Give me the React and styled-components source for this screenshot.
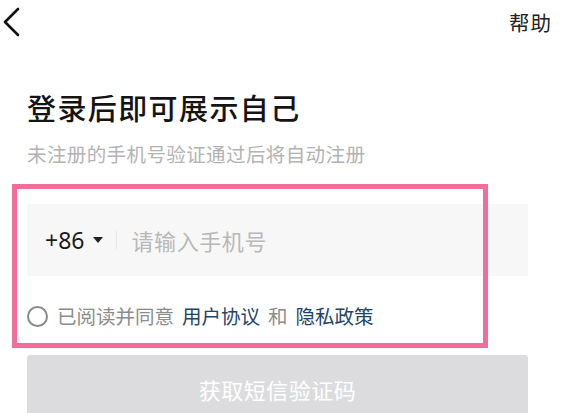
import React from "react";
import styled, { createGlobalStyle } from "styled-components";

const GlobalStyle = createGlobalStyle`
  body {
    margin: 0;
    background: #fff;
    font-family: "Noto Sans CJK SC", "Noto Sans", sans-serif;
    color: #1c1c1c;
  }
`;

const LoginPage = () => {
  return (
    <Page>
      <GlobalStyle />
      <TopBar>
        <BackButton aria-label="返回">
          <svg width="20" height="30" viewBox="0 0 20 30" fill="none">
            <path
              d="M16 2 L3 15 L16 28"
              stroke="#111"
              strokeWidth="2.6"
              strokeLinecap="round"
              strokeLinejoin="round"
            />
          </svg>
        </BackButton>
        <HelpText>帮助</HelpText>
      </TopBar>

      <Content>
        <Title>登录后即可展示自己</Title>
        <SubTitle>未注册的手机号验证通过后将自动注册</SubTitle>

        <Form>
          <PhoneField>
            <AreaCode>
              +86
              <Caret />
            </AreaCode>
            <Divider />
            <PhoneInput placeholder="请输入手机号" />
          </PhoneField>

          <Agreement>
            <Radio />
            <span>已阅读并同意</span>
            <AgreementLink>用户协议</AgreementLink>
            <span>和</span>
            <AgreementLink>隐私政策</AgreementLink>
          </Agreement>

          <Highlight />
        </Form>

        <SubmitButton disabled>获取短信验证码</SubmitButton>
      </Content>
    </Page>
  );
};

export default LoginPage;

const Page = styled.div`
  width: 565px;
  height: 413px;
  overflow: hidden;
  background: #fff;
`;

const TopBar = styled.div`
  display: flex;
  align-items: center;
  justify-content: space-between;
  height: 44px;
  padding: 0 13px 0 2px;
`;

const BackButton = styled.div`
  display: flex;
  align-items: center;
`;

const HelpText = styled.div`
  font-size: 20.5px;
  color: #222;
  letter-spacing: 1px;
`;

const Content = styled.div`
  padding: 0 37px 0 27px;
`;

const Title = styled.h1`
  margin: 45px 0 0;
  font-size: 29px;
  line-height: 36px;
  font-weight: 500;
  color: #141414;
  letter-spacing: 1.4px;
`;

const SubTitle = styled.p`
  margin: 16px 0 0;
  font-size: 19.5px;
  line-height: 26px;
  color: #b3b3b3;
  letter-spacing: 0.4px;
`;

const Form = styled.div`
  position: relative;
  margin-top: 37px;
`;

const PhoneField = styled.div`
  display: flex;
  align-items: center;
  height: 72px;
  background: #f7f7f7;
  padding-left: 18px;
`;

const AreaCode = styled.div`
  display: flex;
  align-items: center;
  font-family: "Noto Sans", sans-serif;
  font-size: 23px;
  color: #1a1a1a;
`;

const Caret = styled.span`
  margin-left: 9px;
  width: 0;
  height: 0;
  border-left: 5px solid transparent;
  border-right: 5px solid transparent;
  border-top: 6px solid #222;
`;

const Divider = styled.span`
  width: 1px;
  height: 18px;
  background: #e6e6e6;
  margin: 0 14px 0 13px;
`;

const PhoneInput = styled.input`
  flex: 1;
  border: none;
  outline: none;
  background: transparent;
  font-family: "Noto Sans CJK SC", sans-serif;
  font-size: 22px;
  color: #222;
  padding: 0;
  letter-spacing: 0.6px;

  &::placeholder {
    color: #b8b8b8;
  }
`;

const Agreement = styled.div`
  display: flex;
  align-items: center;
  gap: 8px;
  margin-top: 27px;
  font-size: 19.5px;
  line-height: 26px;
  color: #8c8c8c;
`;

const Radio = styled.span`
  width: 17px;
  height: 17px;
  border: 2px solid #8a8a8a;
  border-radius: 50%;
  margin-right: 1px;
`;

const AgreementLink = styled.span`
  color: #234468;
`;

const Highlight = styled.div`
  position: absolute;
  left: -15px;
  top: -20px;
  width: 476px;
  height: 164px;
  box-sizing: border-box;
  border: 5px solid #f26e98;
  pointer-events: none;
`;

const SubmitButton = styled.button`
  display: block;
  width: 100%;
  height: 66px;
  margin-top: 26px;
  border: none;
  border-radius: 3px;
  background: #dcdcde;
  color: #fff;
  font-family: "Noto Sans CJK SC", sans-serif;
  font-size: 22px;
  letter-spacing: 0.5px;
  padding-bottom: 0;
`;
